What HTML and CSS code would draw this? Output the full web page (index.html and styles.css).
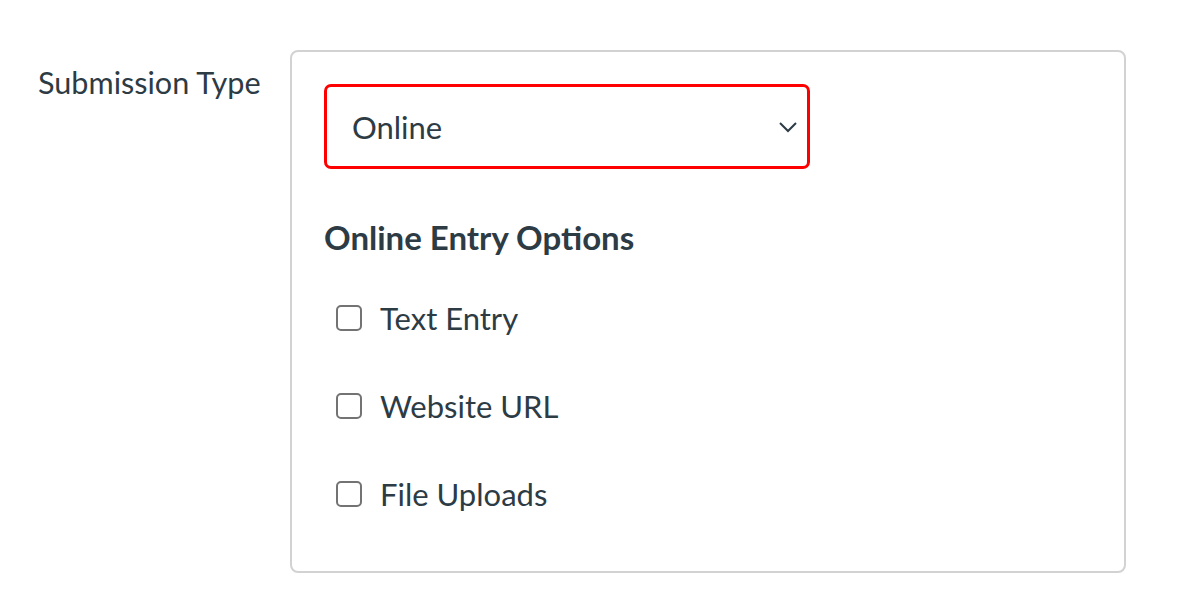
FILE: index.html
```html
<!DOCTYPE html>
<html>
<head>
<meta charset="utf-8">
<link rel="stylesheet" href="styles.css">
</head>
<body>
<div class="row">
  <div class="label">Submission Type</div>
  <div class="panel">
    <div class="select">
      <span class="select-text">Online</span>
      <svg class="chev" width="20" height="12" viewBox="0 0 20 12"><path d="M2 2 L10 10 L18 2" fill="none" stroke="#2d3b45" stroke-width="2"/></svg>
    </div>
    <div class="heading">Online Entry Options</div>
    <div class="options">
      <label class="opt"><span class="box"></span><span>Text Entry</span></label>
      <label class="opt"><span class="box"></span><span>Website URL</span></label>
      <label class="opt"><span class="box"></span><span>File Uploads</span></label>
    </div>
  </div>
</div>
</body>
</html>
```
FILE: styles.css
```css
html, body { margin: 0; padding: 0; background: #fff; }
body { font-family: Lato, "Noto Sans", sans-serif; color: #2d3b45; }
.row { display: flex; padding-top: 50px; }
.label { width: 252px; padding-left: 38px; font-size: 30.6px; line-height: 34px; padding-top: 16px; }
.panel { border: 2px solid #d2d2d2; border-radius: 8px; padding: 32px 0 0 32px; box-sizing: border-box; height: 523px; width: 836px; }
.select { width: 486px; height: 85px; box-sizing: border-box; border: 3px solid #f00; border-radius: 7px; display: flex; align-items: center; justify-content: space-between; padding: 0 9px 0 25px; }
.select-text { font-size: 31px; }
.heading { font-weight: bold; font-size: 33px; line-height: 36px; margin-top: 50px; }
.options { display: flex; flex-direction: column; gap: 52px; margin-top: 45px; padding-left: 12px; }
.opt { display: flex; align-items: center; gap: 18px; font-size: 31px; line-height: 36px; }
.box { width: 26px; height: 26px; box-sizing: border-box; border: 2px solid #737373; border-radius: 5px; }
```
